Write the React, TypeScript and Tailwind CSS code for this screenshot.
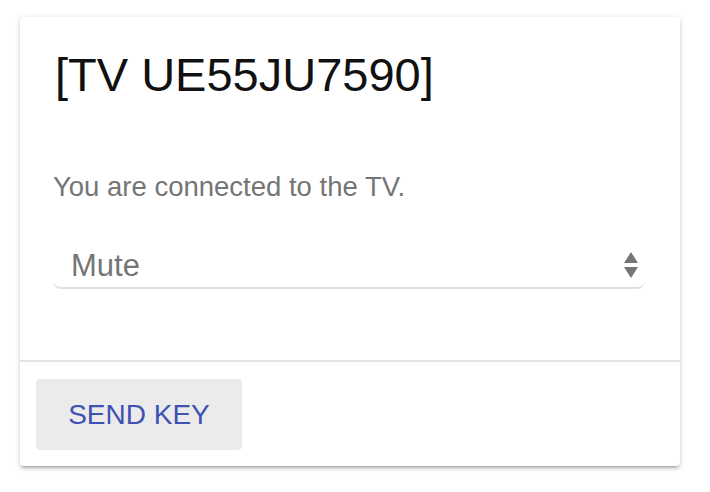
// TV remote card — single card with title, status text, key select and send button.

const FONT = { fontFamily: '"Liberation Sans", Arial, sans-serif' };

function SelectArrows() {
  return (
    <svg width="16" height="28" viewBox="0 0 16 28" className="shrink-0">
      <path d="M8 1 L15 12 L1 12 Z" fill="#757575" />
      <path d="M1 16 L15 16 L8 27 Z" fill="#757575" />
    </svg>
  );
}

export default function App() {
  return (
    <div className="min-h-[492px] w-[710px] bg-white pt-[17px] pl-[20px]" style={FONT}>
      <div className="flex h-[449px] w-[660px] flex-col rounded-[4px] bg-white shadow-[0_3px_3px_0_rgba(0,0,0,0.14),0_4px_2px_-3px_rgba(0,0,0,0.2),0_1px_7px_0_rgba(0,0,0,0.12)]">
        {/* Title */}
        <div className="pl-[35px] pt-[34px]">
          <h1 className="text-[47px] leading-none font-normal text-[#111]">[TV UE55JU7590]</h1>
        </div>

        {/* Supporting text + key select */}
        <div className="px-[33px] pt-[75px]">
          <p className="text-[27.5px] leading-none text-[#757575]">You are connected to the TV.</p>
          <div className="mt-[43px] flex h-[45px] w-[592px] items-center justify-between rounded-b-[8px] border-b-2 border-[#e0e0e0] pl-[18px] pr-[6px]">
            <span className="text-[31px] leading-none text-[#757575]">Mute</span>
            <SelectArrows />
          </div>
        </div>

        <div className="flex-1" />

        {/* Actions */}
        <div className="border-t-2 border-[#e5e5e5] px-[16px] pt-[17px] pb-[16px]">
          <button className="flex h-[71px] w-[206px] items-center justify-center rounded-[4px] bg-[#ebebeb] text-[28px] leading-none text-[#3f51b5]">
            SEND KEY
          </button>
        </div>
      </div>
    </div>
  );
}
